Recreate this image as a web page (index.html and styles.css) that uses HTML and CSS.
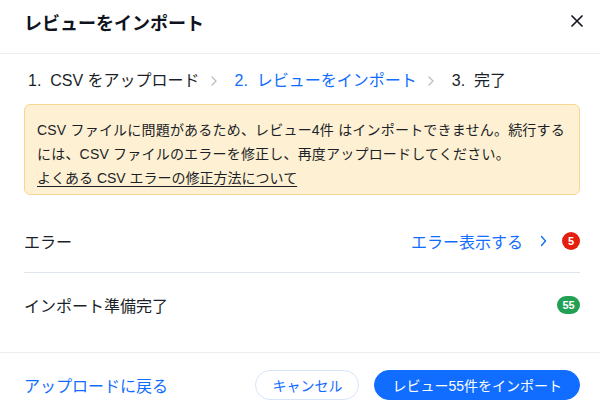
FILE: index.html
```html
<!DOCTYPE html>
<html lang="ja">
<head>
<meta charset="utf-8">
<title>レビューをインポート</title>
<link rel="stylesheet" href="styles.css">
</head>
<body>
<div class="modal">
  <header class="header">
    <h1 class="title">レビューをインポート</h1>
    <button class="close" aria-label="閉じる">
      <svg width="12" height="12" viewBox="0 0 12 12"><path d="M1 1L11 11M11 1L1 11" stroke="#131720" stroke-width="1.7" stroke-linecap="round" fill="none"/></svg>
    </button>
  </header>

  <nav class="steps">
    <span class="step">1.&nbsp; CSV をアップロード</span>
    <svg class="step-chevron" width="6" height="10" viewBox="0 0 6 10"><path d="M1 1L5 5L1 9" stroke="#b8bcc3" stroke-width="1.2" fill="none" stroke-linecap="round" stroke-linejoin="round"/></svg>
    <span class="step step-active">2.&nbsp; レビューをインポート</span>
    <svg class="step-chevron" width="6" height="10" viewBox="0 0 6 10"><path d="M1 1L5 5L1 9" stroke="#b8bcc3" stroke-width="1.2" fill="none" stroke-linecap="round" stroke-linejoin="round"/></svg>
    <span class="step">3.&nbsp; 完了</span>
  </nav>

  <div class="notice">
    <p class="notice-text">CSV ファイルに問題があるため、レビュー4件 はインポートできません。続行するには、CSV ファイルのエラーを修正し、再度アップロードしてください。</p>
    <a class="notice-link" href="#">よくある CSV エラーの修正方法について</a>
  </div>

  <ul class="rows">
    <li class="row row-divided">
      <span class="row-label">エラー</span>
      <span class="row-right">
        <a class="view-link" href="#">エラー表示する
          <svg class="view-chevron" width="7" height="12" viewBox="0 0 7 12"><path d="M1.5 1.5L5.5 6L1.5 10.5" stroke="#116dff" stroke-width="1.4" fill="none" stroke-linecap="round" stroke-linejoin="round"/></svg>
        </a>
        <span class="badge badge-red">5</span>
      </span>
    </li>
    <li class="row">
      <span class="row-label">インポート準備完了</span>
      <span class="badge badge-green">55</span>
    </li>
  </ul>

  <footer class="footer">
    <a class="back-link" href="#">アップロードに戻る</a>
    <div class="actions">
      <button class="btn btn-secondary">キャンセル</button>
      <button class="btn btn-primary">レビュー55件をインポート</button>
    </div>
  </footer>
</div>
</body>
</html>
```

FILE: styles.css
```css
* { box-sizing: border-box; }

html, body {
  margin: 0;
  padding: 0;
  background: #ffffff;
}

body {
  font-family: "Liberation Sans", "Noto Sans CJK JP", sans-serif;
  color: #1b1f29;
  width: 600px;
  height: 414px;
  overflow: hidden;
}

.modal {
  display: flex;
  flex-direction: column;
  width: 600px;
}

.header {
  display: flex;
  justify-content: space-between;
  align-items: flex-start;
  height: 54px;
  padding: 0 17px 0 24px;
  border-bottom: 1px solid #ececec;
}

.title {
  margin: 0;
  padding-top: 12px;
  font-size: 18px;
  line-height: 24px;
  font-weight: 700;
  color: #0f1320;
}

.close {
  margin-top: 15px;
  padding: 0;
  border: 0;
  background: none;
  width: 12px;
  height: 12px;
  display: flex;
}

.steps {
  display: flex;
  align-items: center;
  padding: 15px 20px 0 28px;
  font-size: 16px;
  line-height: 24px;
  color: #1b1f29;
}

.step-chevron {
  margin: 0 18px 0 11px;
}

.step-active {
  color: #116dff;
}

.notice {
  margin: 11px 20px 0 24px;
  padding: 13px 12px 4px 12px;
  background: #fef0d2;
  border: 1px solid #f6d792;
  border-radius: 6px;
  font-size: 14px;
  line-height: 24px;
  color: #1b1f29;
}

.notice-text {
  margin: 0;
  letter-spacing: 0.2px;
}

.notice-link {
  color: #1b1f29;
  text-decoration: underline;
  text-underline-offset: 3px;
}

.rows {
  list-style: none;
  margin: 14px 20px 0 24px;
  padding: 0;
}

.row {
  display: flex;
  justify-content: space-between;
  align-items: center;
  height: 64px;
  font-size: 16px;
}

.row-divided {
  border-bottom: 1px solid #dfe5ec;
}

.row-label {
  color: #1b1f29;
}

.row-right {
  display: flex;
  align-items: center;
}

.view-link {
  display: flex;
  align-items: center;
  color: #116dff;
  text-decoration: none;
}

.view-chevron {
  margin: 0 15px 0 17px;
}

.badge {
  display: inline-flex;
  align-items: center;
  justify-content: center;
  height: 18px;
  min-width: 18px;
  padding: 0 4px;
  border-radius: 9px;
  font-size: 11px;
  font-weight: 700;
  color: #ffffff;
}

.badge-red {
  background: #e3200f;
}

.badge-green {
  background: #22a155;
  min-width: 23px;
}

.footer {
  display: flex;
  justify-content: space-between;
  align-items: center;
  margin-top: 15px;
  padding: 17px 20px 14px 24px;
  border-top: 1px solid #ececec;
}

.back-link {
  font-size: 16px;
  color: #116dff;
  text-decoration: none;
}

.actions {
  display: flex;
  gap: 15px;
}

.btn {
  height: 30px;
  border-radius: 15px;
  font-family: inherit;
  font-size: 14px;
  padding: 0 16px;
  cursor: pointer;
}

.btn-secondary {
  background: #ffffff;
  color: #116dff;
  border: 1px solid #d7e5fb;
}

.btn-primary {
  background: #116dff;
  color: #ffffff;
  border: 1px solid #116dff;
  padding: 0 17px;
}
```
